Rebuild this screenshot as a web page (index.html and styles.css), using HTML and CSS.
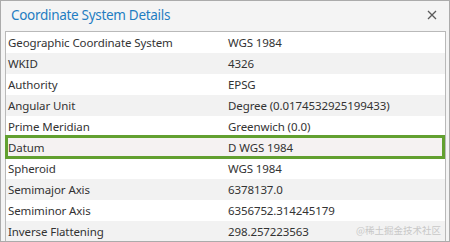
FILE: index.html
```html
<!DOCTYPE html>
<html>
<head>
<meta charset="utf-8">
<link rel="stylesheet" href="styles.css">
</head>
<body>
<div class="window">
  <div class="header">
    <span class="title">Coordinate System Details</span>
    <svg class="close" width="10" height="10" viewBox="0 0 10 10"><path d="M1 1 L9 9 M9 1 L1 9" stroke="#5a5a5a" stroke-width="1.3" fill="none"/></svg>
  </div>
  <div class="table">
    <div class="row"><div class="k">Geographic Coordinate System</div><div class="v">WGS 1984</div></div>
    <div class="row alt"><div class="k">WKID</div><div class="v">4326</div></div>
    <div class="row"><div class="k">Authority</div><div class="v">EPSG</div></div>
    <div class="row alt"><div class="k">Angular Unit</div><div class="v">Degree (0.0174532925199433)</div></div>
    <div class="row"><div class="k">Prime Meridian</div><div class="v">Greenwich (0.0)</div></div>
    <div class="row sel"><div class="k">Datum</div><div class="v">D WGS 1984</div></div>
    <div class="row"><div class="k">Spheroid</div><div class="v">WGS 1984</div></div>
    <div class="row alt"><div class="k">Semimajor Axis</div><div class="v">6378137.0</div></div>
    <div class="row"><div class="k">Semiminor Axis</div><div class="v">6356752.314245179</div></div>
    <div class="row alt"><div class="k">Inverse Flattening</div><div class="v">298.257223563</div><span class="mark">@稀土掘金技术社区</span></div>
  </div>
</div>
</body>
</html>
```
FILE: styles.css
```css
html, body { margin: 0; padding: 0; }
body { font-family: "Noto Sans", "Open Sans", sans-serif; }
.window {
  width: 450px; height: 242px; box-sizing: border-box;
  border: 1px solid #ababab; background: #f4f4f4; overflow: hidden;
}
.header {
  height: 30px; display: flex; align-items: center; justify-content: space-between;
  padding: 0 12px 0 10px;
}
.title { color: #1f7dc2; font-size: 13.5px; letter-spacing: -0.3px; margin-top: -2px; }
.close { margin-top: -3px; }
.table {
  margin: 0 3px 0 4px; border: 1px solid #b9b9b9; border-bottom: none; background: #fff;
}
.row { display: flex; height: 21px; align-items: center; font-size: 11.5px; letter-spacing: -0.1px; color: #333; position: relative; }
.row.alt { background: #f2f2f2; }
.row.sel { background: #f5f2f2; }
.row.sel::after {
  content: ""; position: absolute; left: -1px; right: 0; top: -2px; bottom: -1px;
  border: 3px solid #62a030;
}
.k { width: 218px; padding-left: 2px; }
.v { padding-left: 2px; }
.mark {
  position: absolute; right: 4px; top: 2px; font-size: 9.5px; letter-spacing: 0; color: #c8c8c8;
  font-family: "Noto Sans CJK SC", sans-serif;
}
```
